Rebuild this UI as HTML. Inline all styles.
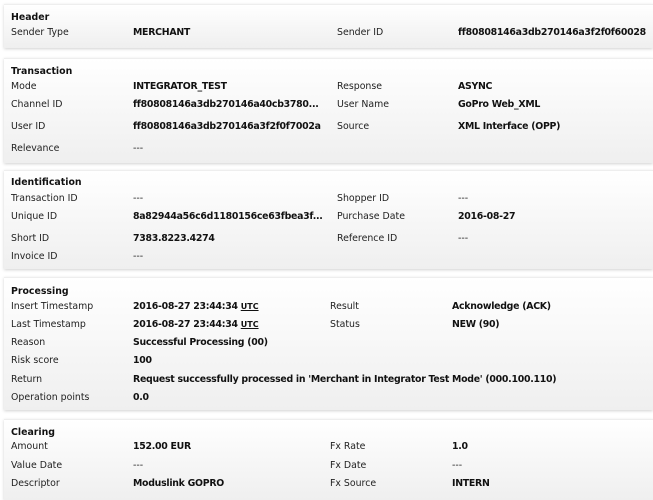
<!DOCTYPE html>
<html><head><meta charset="utf-8"><style>
body{margin:0;width:653px;height:496px;background:#fff;position:relative;overflow:hidden;font-family:"DejaVu Sans",Verdana,sans-serif;font-size:9.4px;color:#222;}
.b{position:absolute;left:4px;right:0;background:linear-gradient(#fff,#efefef);box-shadow:0 1px 3px rgba(0,0,0,.18);border-top:1px solid #eee;}
.t{position:absolute;white-space:nowrap;line-height:12px;margin-top:-4.5px;}
.h,.v{font-weight:bold;color:#111}
.v{letter-spacing:-0.27px}
.u{text-decoration:underline;font-size:8px;letter-spacing:0}
</style></head><body>
<div class="b" style="top:4px;height:43px"></div>
<div class="b" style="top:58px;height:104px"></div>
<div class="b" style="top:170px;height:98px"></div>
<div class="b" style="top:277px;height:132px"></div>
<div class="b" style="top:419px;height:80px"></div>

<div class="t h" style="left:11px;top:16px">Header</div>
<div class="t" style="left:11px;top:31px">Sender Type</div>
<div class="t v" style="left:133px;top:31px">MERCHANT</div>
<div class="t" style="left:337px;top:31px">Sender ID</div>
<div class="t v" style="left:458px;top:31px">ff80808146a3db270146a3f2f0f60028</div>

<div class="t h" style="left:11px;top:70px">Transaction</div>
<div class="t" style="left:11px;top:85px">Mode</div>
<div class="t v" style="left:133px;top:85px">INTEGRATOR_TEST</div>
<div class="t" style="left:337px;top:85px">Response</div>
<div class="t v" style="left:458px;top:85px">ASYNC</div>
<div class="t" style="left:11px;top:103px">Channel ID</div>
<div class="t v" style="left:133px;top:103px">ff80808146a3db270146a40cb3780...</div>
<div class="t" style="left:337px;top:103px">User Name</div>
<div class="t v" style="left:458px;top:103px">GoPro Web_XML</div>
<div class="t" style="left:11px;top:125px">User ID</div>
<div class="t v" style="left:133px;top:125px">ff80808146a3db270146a3f2f0f7002a</div>
<div class="t" style="left:337px;top:125px">Source</div>
<div class="t v" style="left:458px;top:125px">XML Interface (OPP)</div>
<div class="t" style="left:11px;top:147px">Relevance</div>
<div class="t" style="left:133px;top:147px">---</div>

<div class="t h" style="left:11px;top:181px">Identification</div>
<div class="t" style="left:11px;top:197px">Transaction ID</div>
<div class="t" style="left:133px;top:197px">---</div>
<div class="t" style="left:337px;top:197px">Shopper ID</div>
<div class="t" style="left:458px;top:197px">---</div>
<div class="t" style="left:11px;top:215px">Unique ID</div>
<div class="t v" style="left:133px;top:215px">8a82944a56c6d1180156ce63fbea3f...</div>
<div class="t" style="left:337px;top:215px">Purchase Date</div>
<div class="t v" style="left:458px;top:215px">2016-08-27</div>
<div class="t" style="left:11px;top:237px">Short ID</div>
<div class="t v" style="left:133px;top:237px">7383.8223.4274</div>
<div class="t" style="left:337px;top:237px">Reference ID</div>
<div class="t" style="left:458px;top:237px">---</div>
<div class="t" style="left:11px;top:255px">Invoice ID</div>
<div class="t" style="left:133px;top:255px">---</div>

<div class="t h" style="left:11px;top:290px">Processing</div>
<div class="t" style="left:11px;top:305px">Insert Timestamp</div>
<div class="t v" style="left:133px;top:305px">2016-08-27 23:44:34 <span class="u">UTC</span></div>
<div class="t" style="left:330px;top:305px">Result</div>
<div class="t v" style="left:452px;top:305px">Acknowledge (ACK)</div>
<div class="t" style="left:11px;top:323px">Last Timestamp</div>
<div class="t v" style="left:133px;top:323px">2016-08-27 23:44:34 <span class="u">UTC</span></div>
<div class="t" style="left:330px;top:323px">Status</div>
<div class="t v" style="left:452px;top:323px">NEW (90)</div>
<div class="t" style="left:11px;top:341px">Reason</div>
<div class="t v" style="left:133px;top:341px">Successful Processing (00)</div>
<div class="t" style="left:11px;top:359px">Risk score</div>
<div class="t v" style="left:133px;top:359px">100</div>
<div class="t" style="left:11px;top:378px">Return</div>
<div class="t v" style="left:133px;top:378px">Request successfully processed in 'Merchant in Integrator Test Mode' (000.100.110)</div>
<div class="t" style="left:11px;top:396px">Operation points</div>
<div class="t v" style="left:133px;top:396px">0.0</div>

<div class="t h" style="left:11px;top:431px">Clearing</div>
<div class="t" style="left:11px;top:445px">Amount</div>
<div class="t v" style="left:133px;top:445px">152.00 EUR</div>
<div class="t" style="left:330px;top:445px">Fx Rate</div>
<div class="t v" style="left:452px;top:445px">1.0</div>
<div class="t" style="left:11px;top:464px">Value Date</div>
<div class="t" style="left:133px;top:464px">---</div>
<div class="t" style="left:330px;top:464px">Fx Date</div>
<div class="t" style="left:452px;top:464px">---</div>
<div class="t" style="left:11px;top:482px">Descriptor</div>
<div class="t v" style="left:133px;top:482px">Moduslink GOPRO</div>
<div class="t" style="left:330px;top:482px">Fx Source</div>
<div class="t v" style="left:452px;top:482px">INTERN</div>
</body></html>
